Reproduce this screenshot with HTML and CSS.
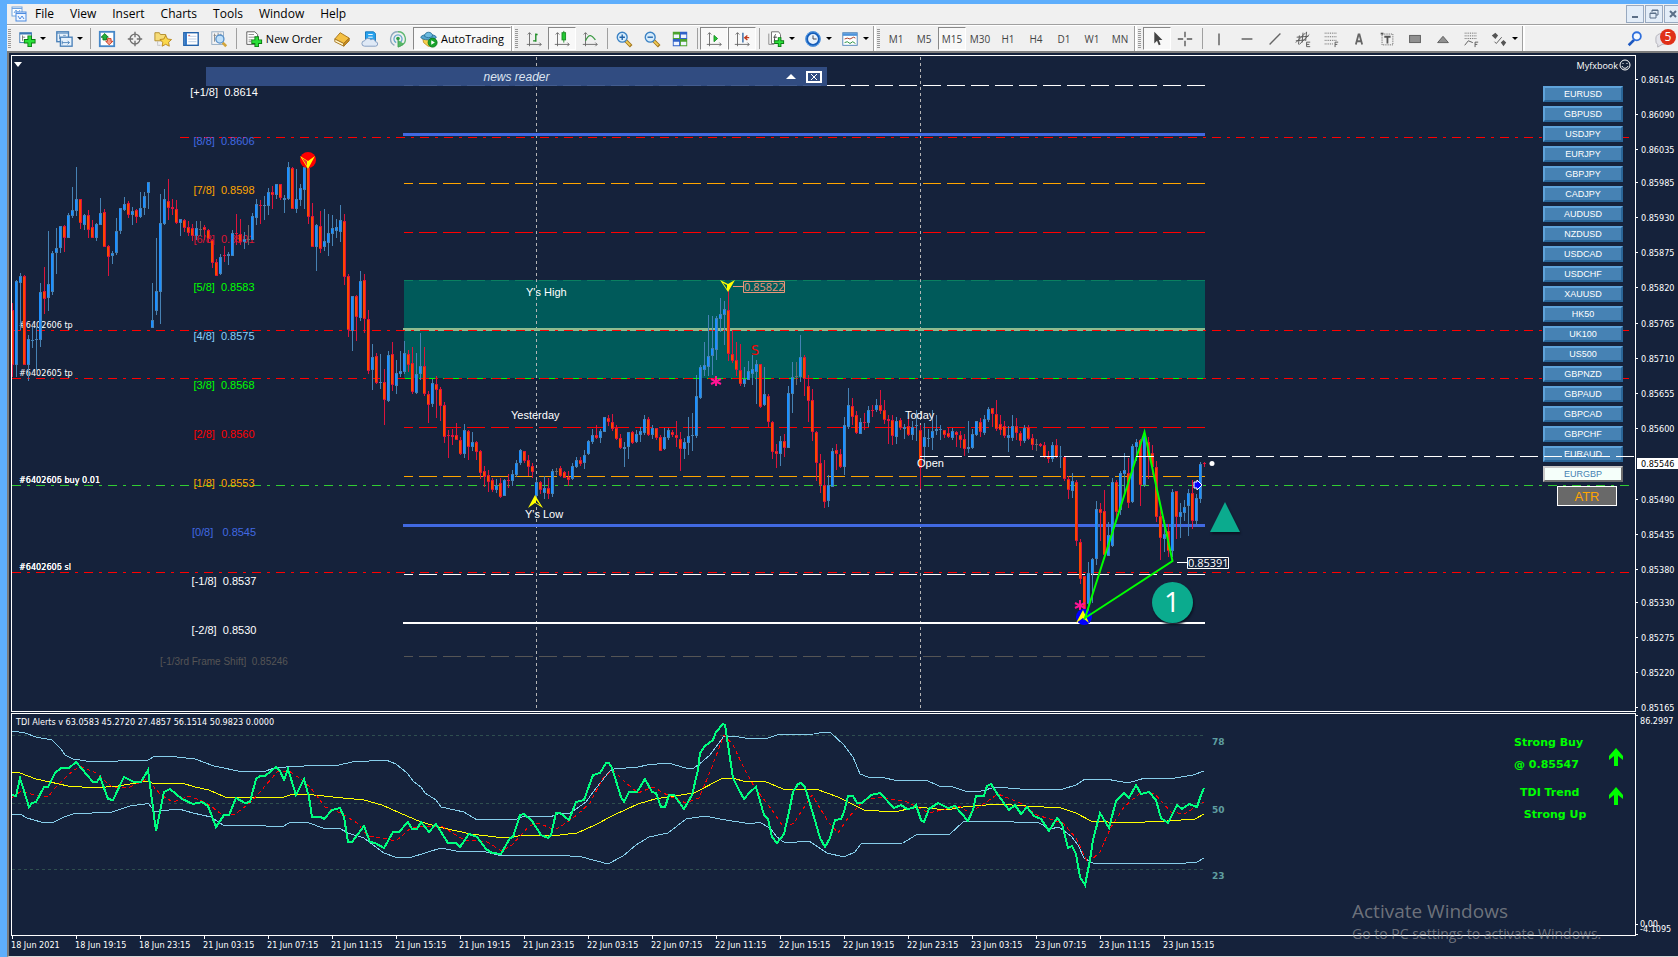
FILE: index.html
```
<!DOCTYPE html>
<html lang="en">
<head>
    <meta charset="UTF-8">
    <meta name="viewport" content="width=device-width, initial-scale=1.0">
    <title>EURGBP, M15</title>
    <link rel="stylesheet" href="styles.css">
</head>

<body>
    <div class="app">
        <header class="menubar">
            <svg class="app-icon" width="16" height="16" viewBox="0 0 16 16"><rect x="1" y="1" width="10" height="9" fill="#fff" stroke="#6fa3e0"/><path d="M1 2.500h10" stroke="#6fa3e0"/><path d="M3 7l2-3 2 3 2-3" fill="none" stroke="#6fa3e0"/><rect x="5" y="6" width="10" height="9" fill="#eef5ff" stroke="#4d8be0"/><path d="M5 7.500h10" stroke="#4d8be0"/><path d="M7 10l2 3 2-3 2 3" fill="none" stroke="#4d8be0"/></svg>
            <nav class="menu">
                <a href="#file">File</a>
                <a href="#view">View</a>
                <a href="#insert">Insert</a>
                <a href="#charts">Charts</a>
                <a href="#tools">Tools</a>
                <a href="#window">Window</a>
                <a href="#help">Help</a>
            </nav>
            <div class="window-buttons">
                <button aria-label="Minimize"><svg width="12" height="12"><path d="M3 9h6" stroke="#5b6f88" stroke-width="2"/></svg></button>
                <button aria-label="Restore"><svg width="12" height="12" fill="none" stroke="#5b6f88"><path d="M4 4V2h6v5H8M4 2.500h6"/><path d="M2 5h6v5H2zM2 5.500h6"/></svg></button>
                <button aria-label="Close"><svg width="12" height="12"><path d="M3 3l6 6M9 3l-6 6" stroke="#5b6f88" stroke-width="2"/></svg></button>
            </div>
        </header>

        <div class="toolbar">
            <div class="group">
                <span class="grip"></span>
                <button class="tool drop" aria-label="New chart"><svg viewBox="0 0 20 20"><rect x="2" y="3" width="13" height="11" fill="#fff" stroke="#3d78b4"/><path d="M2 4h13" stroke="#3d78b4" stroke-width="2"/><path d="M5 6v6M5 8h3" stroke="#777"/><path d="M13 6v13M6.500 12.500h13" stroke="#0a7a12" stroke-width="5"/><path d="M13 7v11M7.500 12.500h11" stroke="#2be03a" stroke-width="3"/></svg></button>
                <button class="tool drop" aria-label="Profiles"><svg viewBox="0 0 20 20"><rect x="2" y="2" width="13" height="11" fill="#e8f2fc" stroke="#4a80b8" stroke-width="1.500"/><path d="M2 3.500h13" stroke="#4a80b8"/><path d="M5 5v5l1-2M9 6h3" stroke="#6d96c0" fill="none"/><rect x="6" y="8" width="13" height="10" fill="#e8f2fc" stroke="#4a80b8" stroke-width="1.500"/><path d="M8 12v4M8 14h8l-2-2M16 14l-2 2" stroke="#4a80b8" fill="none"/></svg></button>
                <span class="sep"></span>
                <button class="tool" aria-label="Market Watch"><svg viewBox="0 0 20 20"><rect x="2" y="2" width="16" height="16" fill="#fff" stroke="#4587c8" stroke-width="2"/><path d="M7.500 4l4 4h-2v3h-4V8h-2z" fill="#24b13a" stroke="#0b7520"/><path d="M12.500 16.500l-4-4h2v-3h4v3h2z" fill="#f59a85" stroke="#c8361a"/></svg></button>
                <button class="tool" aria-label="Data Window"><svg viewBox="0 0 20 20" fill="none" stroke="#707070" stroke-width="1.500"><circle cx="10" cy="10" r="5.500"/><path d="M10 2v6M10 12v6M2 10h6M12 10h6"/></svg></button>
                <button class="tool" aria-label="Navigator"><svg viewBox="0 0 20 20"><path d="M1 3h5l1 2h6v7H1z" fill="#f6dc78" stroke="#b08a28"/><path d="M4 13v4h4" fill="none" stroke="#999" stroke-dasharray="1 1"/><path d="M13 6l2 4 4.500.6-3.300 3 .8 4.400-4-2.100-4 2.100.8-4.400-3.300-3L11 10z" fill="#fbd84b" stroke="#b8861c"/></svg></button>
                <button class="tool" aria-label="Terminal"><svg viewBox="0 0 20 20"><rect x="2" y="3" width="16" height="14" fill="#fff" stroke="#1d5ea8" stroke-width="1.500"/><path d="M4 3v14" stroke="#2e74c4" stroke-width="3"/><path d="M7 7h9M7 10h9M7 13h9" stroke="#b5cbe4"/><path d="M7 6h2" stroke="#d55" /></svg></button>
                <button class="tool" aria-label="Strategy Tester"><svg viewBox="0 0 20 20"><rect x="2" y="2" width="13" height="14" fill="#f4f4f4" stroke="#90a8c0"/><path d="M5 4v9M4 6h3M9 3v4M12 4v5" stroke="#888"/><path d="M14 14l4 4" stroke="#d2a53c" stroke-width="3"/><circle cx="11" cy="10" r="4.500" fill="#bfe0fa" stroke="#5890c8" stroke-width="1.500"/></svg></button>
                <span class="sep"></span>
                <button class="tool wide order"><svg viewBox="0 0 20 20"><path d="M2 2h9l3 3v11H2z" fill="#fff" stroke="#555"/><path d="M4 5h6M4 8h8M4 11h4M4 13h3" stroke="#888"/><path d="M13 7v12M7 13h12" stroke="#0a7a12" stroke-width="5"/><path d="M13 8v10M8 13h10" stroke="#2be03a" stroke-width="3"/></svg>New Order</button>
                <button class="tool" aria-label="MetaEditor"><svg viewBox="0 0 20 20"><path d="M2 10l6-7 10 6-6 6z" fill="#f4c044" stroke="#a4731a"/><path d="M2 10v3l10 5v-3z" fill="#fff3c8" stroke="#a4731a"/><path d="M12 15l6-6v3l-6 6z" fill="#c98b20" stroke="#a4731a"/></svg></button>
                <button class="tool" aria-label="Web terminal"><svg viewBox="0 0 20 20"><path d="M5 2h9l2 2v8H5z" fill="#29a3ee" stroke="#0b72b8"/><path d="M8 5h5M8 8h5" stroke="#fff"/><path d="M4 18a3 3 0 010-6 4 4 0 017-1 3 3 0 015 2 2.500 2.500 0 010 5z" fill="#dfe9f6" stroke="#7f99bd"/></svg></button>
                <button class="tool" aria-label="Signals"><svg viewBox="0 0 20 20" fill="none"><path d="M10 2a8 8 0 00-4 15" stroke="#8fa9bd" stroke-width="1.500"/><path d="M10 2a8 8 0 014 15" stroke="#5eb872" stroke-width="1.500"/><path d="M8 14a4.500 4.500 0 114 0" stroke="#6aa8cf" stroke-width="1.500"/><circle cx="10" cy="9.500" r="2" fill="#2f9e48"/><path d="M10 11v8c3-1 5-2 6-4" fill="#57b868" stroke="#3f9e52"/></svg></button>
                <button class="tool wide pressed auto"><svg viewBox="0 0 20 20"><path d="M3 9l1 5 5 4h4l4-8z" fill="#f7cf4a" stroke="#c0922a"/><ellipse cx="9.500" cy="8" rx="8.500" ry="3" fill="#55a5cf" stroke="#2d7299"/><path d="M5 7c0-6 9-6 9 0-3 2-6 2-9 0z" fill="#6cbbe0" stroke="#2d7299"/><circle cx="14" cy="14" r="5" fill="#18a32c" stroke="#0b7a1b"/><path d="M12.500 11.500l4 2.500-4 2.500z" fill="#fff"/></svg>AutoTrading</button>
            </div>
            <div class="group">
                <span class="grip"></span>
                <button class="tool" aria-label="Bar chart"><svg viewBox="0 0 20 20" fill="none" stroke="#666"><path d="M5 3v15M2 16h16M3 5l2-2 2 2M16 14l2 2-2 2"/><path d="M12 4v9M12 5h2M9 12h3" stroke="#1a8a22" stroke-width="1.500"/></svg></button>
                <button class="tool pressed" aria-label="Candlesticks"><svg viewBox="0 0 20 20" fill="none" stroke="#666"><path d="M5 3v15M2 16h16M3 5l2-2 2 2M16 14l2 2-2 2"/><path d="M12 1v13" stroke="#1a8a22"/><rect x="10" y="3" width="4" height="8" fill="#22c832" stroke="#1a8a22"/></svg></button>
                <button class="tool" aria-label="Line chart"><svg viewBox="0 0 20 20" fill="none" stroke="#666"><path d="M5 3v15M2 16h16M3 5l2-2 2 2M16 14l2 2-2 2"/><path d="M5 12c4-9 7-6 11-1" stroke="#3a9a42" stroke-width="1.500"/></svg></button>
                <span class="sep"></span>
                <button class="tool" aria-label="Zoom in"><svg viewBox="0 0 20 20"><path d="M12 12l6 6" stroke="#a4771c" stroke-width="4"/><path d="M12 12l5 5" stroke="#f0cb55" stroke-width="2"/><circle cx="8" cy="8" r="5.500" fill="#d6ecfc" stroke="#3b82c4" stroke-width="1.500"/><path d="M8 5v6M5 8h6" stroke="#1f62a8" stroke-width="1.500"/></svg></button>
                <button class="tool" aria-label="Zoom out"><svg viewBox="0 0 20 20"><path d="M12 12l6 6" stroke="#a4771c" stroke-width="4"/><path d="M12 12l5 5" stroke="#f0cb55" stroke-width="2"/><circle cx="8" cy="8" r="5.500" fill="#d6ecfc" stroke="#3b82c4" stroke-width="1.500"/><path d="M5 8h6" stroke="#1f62a8" stroke-width="1.500"/></svg></button>
                <button class="tool" aria-label="Tile windows"><svg viewBox="0 0 20 20"><path d="M2 2h8v8H2zM10 10h8v8h-8z" fill="#4aa22c"/><path d="M10 2h8v8h-8zM2 10h8v8H2z" fill="#2f62c8"/><path d="M3 5h6v4H3zM11 5h6v4h-6zM3 13h6v4H3zM11 13h6v4h-6z" fill="#eef4ff"/></svg></button>
                <span class="sep"></span>
                <button class="tool pressed" aria-label="Auto scroll"><svg viewBox="0 0 20 20" fill="none" stroke="#666"><path d="M5 3v15M2 16h16M3 5l2-2 2 2M16 14l2 2-2 2"/><path d="M10 6v7l4-3.500z" fill="#22c832" stroke="#1a8a22"/></svg></button>
                <button class="tool pressed" aria-label="Chart shift"><svg viewBox="0 0 20 20" fill="none" stroke="#666"><path d="M5 3v15M2 16h16M3 5l2-2 2 2M16 14l2 2-2 2"/><path d="M11 3v11" stroke="#2b62a0" stroke-width="1.500"/><path d="M18 8.500h-4M16 6l-3 2.500 3 2.500" stroke="#c23a1c" stroke-width="1.500"/></svg></button>
                <span class="sep"></span>
                <button class="tool drop" aria-label="Indicators"><svg viewBox="0 0 20 20"><path d="M5 2h8l2 3v10H5z" fill="#fff" stroke="#666"/><path d="M2 4v12h6" fill="none" stroke="#888"/><path d="M10 5c-2 0-1 3-2 8M7 8h4" fill="none" stroke="#333"/><path d="M14 8v11M8 13.500h11" stroke="#0a7a12" stroke-width="4"/><path d="M14 9v9M9 13.500h9" stroke="#2be03a" stroke-width="2"/></svg></button>
                <button class="tool drop" aria-label="Periods"><svg viewBox="0 0 20 20"><circle cx="10" cy="10" r="7" fill="#e8f2fc" stroke="#155cb8" stroke-width="3"/><circle cx="10" cy="10" r="8" fill="none" stroke="#5fa6ee"/><path d="M10 6v4h4" fill="none" stroke="#334"/></svg></button>
                <button class="tool drop" aria-label="Templates"><svg viewBox="0 0 20 20"><rect x="2" y="3" width="16" height="14" fill="#fff" stroke="#4a80b8"/><path d="M2 5h16" stroke="#4f94da" stroke-width="3"/><path d="M4 10l3-1 3 1 4-2 2 1" stroke="#a33018" fill="none"/><path d="M4 14l3-1 3 2 3-2 3 2" stroke="#1a8a32" fill="none"/></svg></button>
            </div>
            <div class="group">
                <span class="grip"></span>
                <button class="tool period">M1</button>
                <button class="tool period">M5</button>
                <button class="tool period pressed">M15</button>
                <button class="tool period">M30</button>
                <button class="tool period">H1</button>
                <button class="tool period">H4</button>
                <button class="tool period">D1</button>
                <button class="tool period">W1</button>
                <button class="tool period">MN</button>
            </div>
            <div class="group">
                <span class="grip"></span>
                <button class="tool pressed" aria-label="Cursor"><svg viewBox="0 0 20 20"><path d="M7 2v13l3-3 2 5 2-1-2-5h4z" fill="#444"/></svg></button>
                <button class="tool" aria-label="Crosshair"><svg viewBox="0 0 20 20" stroke="#555" stroke-width="1.500"><path d="M10 2v6M10 12v6M2 10h6M12 10h6"/></svg></button>
                <span class="sep"></span>
                <button class="tool" aria-label="Vertical line"><svg viewBox="0 0 20 20" stroke="#555" stroke-width="1.500"><path d="M10 4v13"/></svg></button>
                <button class="tool" aria-label="Horizontal line"><svg viewBox="0 0 20 20" stroke="#555" stroke-width="1.500"><path d="M4 10h12"/></svg></button>
                <button class="tool" aria-label="Trendline"><svg viewBox="0 0 20 20" stroke="#666" stroke-width="1.500"><path d="M4 16L16 4"/></svg></button>
                <button class="tool" aria-label="Equidistant channel"><svg viewBox="0 0 20 20" stroke="#555" fill="none"><path d="M2 14L13 3M6 16L17 5M3 8l13-1M2 12l11-1M6 6l-1 10M10 3l-1 11M14 2l-1 10"/><path d="M18 13.500h-4v5h4M14 16h3"/></svg></button>
                <button class="tool" aria-label="Fibonacci retracement"><svg viewBox="0 0 20 20" stroke="#555" fill="none"><path d="M3 3.500h14M3 7.500h14M3 11.500h14M3 15.500h9" stroke-dasharray="1 1"/><path d="M14.500 19v-5.500H18M14.500 16H17"/></svg></button>
                <button class="tool" aria-label="Text"><svg viewBox="0 0 20 20" stroke="#666" stroke-width="2" fill="none"><path d="M6.500 16L9.500 5h1l3 11M8 12.500h4"/></svg></button>
                <button class="tool" aria-label="Text label"><svg viewBox="0 0 20 20" stroke="#555" fill="none"><rect x="4.500" y="4.500" width="12" height="12" stroke-dasharray="1 1"/><path d="M3 3h3v2H3z" fill="#555" stroke="none"/><path d="M7 7.500h7M10.500 7v8" stroke-width="2"/></svg></button>
                <button class="tool" aria-label="Rectangle"><svg viewBox="0 0 20 20"><rect x="4" y="6" width="12" height="8" fill="#909090" stroke="#5a5a5a"/></svg></button>
                <button class="tool" aria-label="Triangle"><svg viewBox="0 0 20 20"><path d="M4 14l6-7 6 7z" fill="#909090" stroke="#5a5a5a"/></svg></button>
                <button class="tool" aria-label="Fibonacci fan"><svg viewBox="0 0 20 20" stroke="#555" fill="none"><path d="M3 3.500h14M3 6.500h14M3 9.500h14" stroke-dasharray="1 1"/><path d="M3 17l4-5 5 2M14.500 19v-5.500H18M14.500 16H17"/></svg></button>
                <button class="tool drop" aria-label="Arrows"><svg viewBox="0 0 20 20" fill="#555"><path d="M6 3l3 3-3 4-4-4zM15 11l3 3-3 4-3-4z"/><path d="M5 13l2 2 6-7" fill="none" stroke="#555"/></svg></button>
            </div>
            <div class="right-tools">
                <button class="tool" aria-label="Search"><svg viewBox="0 0 20 20" fill="none"><path d="M9 11l-6 6" stroke="#1d58c0" stroke-width="3"/><circle cx="12" cy="7" r="4.500" fill="#f4f9ff" stroke="#2f6fdc" stroke-width="2"/></svg></button>
                <button class="tool chat" aria-label="Messages"><svg viewBox="0 0 20 20"><path d="M1 9a6 5 0 0112 0v3a5 4 0 01-5 4l-5 3v-3a4 4 0 01-2-4z" fill="#e4e4ea" stroke="#b0b0b8"/></svg><span class="badge">5</span></button>
            </div>
        </div>

        <main class="workspace">
            <section class="pane main-pane">
                <svg class="plot" role="img" aria-label="EURGBP 15 minute chart">
                    <g id="backdrop" transform="translate(-12 -56)">
                        <rect class="zone" x="404" y="280" width="801" height="98"/>
                        <path d="M14 62h8l-4 5z" fill="#fff"/>
                        <line class="day" x1="536" x2="536" y1="57" y2="711"/>
                        <line class="day" x1="920" x2="920" y1="57" y2="711"/>
                    </g>
                    <g id="levels" transform="translate(-12 -56)"></g>
                    <g class="orders">
                        <line x1="168" x2="100%" y1="81.500" y2="81.500"/>
                        <line x1="0" x2="100%" y1="274.500" y2="274.500"/>
                        <line x1="0" x2="100%" y1="322.500" y2="322.500"/>
                        <line class="entry" x1="0" x2="100%" y1="429.500" y2="429.500"/>
                        <line x1="0" x2="100%" y1="516.500" y2="516.500"/>
                    </g>
                    <g class="level-text" transform="translate(-12 -56)">
                        <text x="224" y="96" fill="#fff">[+1/8]&#160; 0.8614</text>
                        <text x="224" y="145" fill="#4169e1">[8/8]&#160; 0.8606</text>
                        <text x="224" y="194" fill="#ffa500">[7/8]&#160; 0.8598</text>
                        <text x="224" y="243" fill="#dc1432">[6/8]&#160; 0.8591</text>
                        <text x="224" y="291" fill="#00ff00">[5/8]&#160; 0.8583</text>
                        <text x="224" y="340" fill="#87cefa">[4/8]&#160; 0.8575</text>
                        <text x="224" y="389" fill="#00ff00">[3/8]&#160; 0.8568</text>
                        <text x="224" y="438" fill="#ff0000">[2/8]&#160; 0.8560</text>
                        <text x="224" y="487" fill="#ffa500">[1/8]&#160; 0.8553</text>
                        <text x="224" y="536" fill="#4169e1">[0/8]&#160;&#160; 0.8545</text>
                        <text x="224" y="585" fill="#fff">[-1/8]&#160; 0.8537</text>
                        <text x="224" y="634" fill="#fff">[-2/8]&#160; 0.8530</text>
                        <text class="small" x="224" y="665" fill="#555">[-1/3rd Frame Shift]&#160; 0.85246</text>
                    </g>
                    <g class="order-text" transform="translate(-12 -56)">
                        <text x="19" y="328">#6402606 tp</text>
                        <text x="19" y="376">#6402605 tp</text>
                        <text x="19" y="483">#6402605 buy 0.01</text>
                        <text x="19" y="483">#6402606 buy 0.01</text>
                        <text x="19" y="570">#6402605 sl</text>
                        <text x="19" y="570">#6402606 sl</text>
                    </g>
                    <g id="candles" transform="translate(-12 -56)"></g>
                    <g transform="translate(-12 -56)">
                        <g class="note-text">
                            <text x="526" y="296">Y's High</text>
                            <text x="511" y="419">Yesterday</text>
                            <text x="525" y="518">Y's Low</text>
                            <text x="905" y="419">Today</text>
                            <text x="917" y="467">Open</text>
                        </g>
                        <circle cx="308" cy="160" r="8" fill="#f00"/>
                        <path d="M300 156l8 5 7-5-7 13z" fill="#ff0"/>
                        <path d="M302 158l5 3v5z" fill="#e33"/>
                        <path d="M720 280l8 4 7-4-7 12z" fill="#ff0"/>
                        <path d="M723 283l4 2v4z" fill="#005a5a"/>
                        <path d="M535 495l-7 13 7-5 8 5z" fill="#ff0"/>
                        <path d="M536 500l4 5-4-2z" fill="#15223b"/>
                        <path class="tag salmon" d="M733 286.500h10M743.500 281.500h41v11h-41z"/>
                        <text class="tag-text salmon" x="744" y="291">0.85822</text>
                        <text class="sell" x="755" y="355">S</text>
                        <g class="stars">
                            <path d="M716 376v10M711 379l10 5M721 379l-10 5"/>
                            <path d="M1080 600v10M1075 603l10 5M1085 603l-10 5"/>
                        </g>
                        <circle cx="1084" cy="617" r="8" fill="#00f"/>
                        <path d="M1083 610l-7 13 7-5 6 5z" fill="#ff0"/>
                        <path class="zigzag" d="M1085 618L1144.500 432 1172.500 561z"/>
                        <path class="tag" d="M1177 562.500h10M1187.500 557.500h41v11h-41z"/>
                        <text class="tag-text" x="1188" y="567">0.85391</text>
                        <path d="M1194 482h3v-2l5 5-5 5v-2h-3z" fill="#00f" stroke="#fff"/>
                        <circle cx="1212" cy="463.500" r="2.500" fill="#fff"/>
                        <path class="callout" d="M1225 502l15 30h-30z"/>
                        <circle class="callout" cx="1172.500" cy="602.500" r="20.500"/>
                        <text class="callout-text" x="1172" y="612">1</text>
                    </g>
                </svg>

                <div class="news">
                    <span class="news-title">news reader</span>
                    <span class="news-buttons">
                        <button aria-label="Collapse"><svg width="10" height="12"><path d="M0 8l5-5 5 5z" fill="#fff"/></svg></button>
                        <button aria-label="Close"><svg width="16" height="12" fill="none" stroke="#fff"><rect x="1" y="1" width="14" height="10" stroke-width="2"/><path d="M5 3l6 6M11 3l-6 6"/></svg></button>
                    </span>
                </div>

                <div class="side">
                    <p class="expert">Myfxbook <svg width="12" height="12" fill="none" stroke="#fff"><circle cx="6" cy="6" r="5"/><path d="M4 4v1M8 4v1M3 7c1 3 5 3 6 0"/></svg></p>
                    <div class="symbols">
                        <button>EURUSD</button>
                        <button>GBPUSD</button>
                        <button>USDJPY</button>
                        <button>EURJPY</button>
                        <button>GBPJPY</button>
                        <button>CADJPY</button>
                        <button>AUDUSD</button>
                        <button>NZDUSD</button>
                        <button>USDCAD</button>
                        <button>USDCHF</button>
                        <button>XAUUSD</button>
                        <button>HK50</button>
                        <button>UK100</button>
                        <button>US500</button>
                        <button>GBPNZD</button>
                        <button>GBPAUD</button>
                        <button>GBPCAD</button>
                        <button>GBPCHF</button>
                        <button>EURAUD</button>
                        <button class="active">EURGBP</button>
                    </div>
                    <button class="atr">ATR</button>
                </div>

                <svg class="plot over"><line class="open-line" x1="908" x2="100%" y1="400.500" y2="400.500"/></svg>
            </section>
            <svg class="axis" id="priceAxis"></svg>

            <section class="pane tdi-pane">
                <svg class="plot" role="img" aria-label="TDI indicator">
                    <g id="tdi" transform="translate(-12 -714)">
                        <path class="tdi-level" d="M12 735.500h1192M12 803.500h1192M12 869.500h1192"/>
                    </g>
                    <g class="tdi-text" transform="translate(-12 -714)">
                        <text x="1212" y="745">78</text>
                        <text x="1212" y="813">50</text>
                        <text x="1212" y="879">23</text>
                    </g>
                </svg>
                <p class="tdi-title">TDI Alerts v 63.0583 45.2720 27.4857 56.1514 50.9823 0.0000</p>
                <div class="signals">
                    <div class="signal buy">
                        <p>Strong Buy<br>@ 0.85547</p>
                        <svg width="16" height="18"><path d="M8 0l7 8v4l-5-4v10H6V8l-5 4V8z" fill="#0f0"/></svg>
                    </div>
                    <div class="signal trend">
                        <p>TDI Trend<br>&#160;Strong Up</p>
                        <svg width="16" height="18"><path d="M8 0l7 8v4l-5-4v10H6V8l-5 4V8z" fill="#0f0"/></svg>
                    </div>
                </div>
            </section>
            <svg class="axis" id="tdiAxis">
                <path d="M0 2.500h2M0 211.500h2M0 221.500h2" stroke="#fff"/>
                <text x="4" y="11">86.2997</text>
                <text x="4" y="214">0.00</text>
                <text x="4" y="219">-4.1095</text>
            </svg>

            <div class="time-axis">
                <span>18 Jun 2021</span>
                <span>18 Jun 19:15</span>
                <span>18 Jun 23:15</span>
                <span>21 Jun 03:15</span>
                <span>21 Jun 07:15</span>
                <span>21 Jun 11:15</span>
                <span>21 Jun 15:15</span>
                <span>21 Jun 19:15</span>
                <span>21 Jun 23:15</span>
                <span>22 Jun 03:15</span>
                <span>22 Jun 07:15</span>
                <span>22 Jun 11:15</span>
                <span>22 Jun 15:15</span>
                <span>22 Jun 19:15</span>
                <span>22 Jun 23:15</span>
                <span>23 Jun 03:15</span>
                <span>23 Jun 07:15</span>
                <span>23 Jun 11:15</span>
                <span>23 Jun 15:15</span>
            </div>

            <div class="watermark">
                <p class="big">Activate Windows</p>
                <p>Go to PC settings to activate Windows.</p>
            </div>
        </main>
    </div>

    <script src="chart.js"></script>
</body>
</html>
```
FILE: styles.css
```
* {
    box-sizing: border-box;
}

body {
    margin: 0;
    font-family: "Open Sans", "Noto Sans", sans-serif;
    overflow: hidden;
}

p {
    margin: 0;
}

button {
    margin: 0;
    padding: 0;
    border: none;
    background: none;
    font: inherit;
    color: inherit;
}

.app {
    display: flex;
    flex-direction: column;
    height: 100vh;
    padding: 4px 0 0 7px;
    background: #5eaefc;
}

/* Menu */
.menubar {
    display: flex;
    align-items: center;
    height: 21px;
    padding-left: 4px;
    background: #f0f0f0;
    border-bottom: 1px solid #a0a0a0;
    overflow: hidden;
}

.menu {
    display: flex;
    flex: 1;
    gap: 16px;
    padding-left: 8px;
}

.menu a {
    color: #000;
    font-size: 12px;
    line-height: 18px;
    text-decoration: none;
}

.window-buttons {
    display: flex;
    gap: 1px;
    margin-right: -4px;
}

.window-buttons button {
    display: flex;
    align-items: center;
    justify-content: center;
    width: 18px;
    height: 18px;
    background: #e3edf8;
    border: 1px solid #98a9c0;
}

/* Toolbar */
.toolbar {
    display: flex;
    height: 28px;
    background: #f0f0f0;
    border-top: 1px solid #fff;
    border-bottom: 2px solid #7c7c7c;
    overflow: hidden;
}

.group {
    display: flex;
    align-items: center;
    border-right: 2px solid #fff;
    box-shadow: inset -1px 0 #a0a0a0;
    padding-right: 1px;
}

.grip {
    width: 6px;
    height: 20px;
    border-right: 2px solid transparent;
    background: repeating-linear-gradient(#999 0 1px, #f0f0f0 1px 2px) content-box;
    padding-left: 1px;
}

.sep {
    width: 6px;
    height: 21px;
    background: linear-gradient(90deg, transparent 3px, #a0a0a0 3px 4px, transparent 4px);
}

.tool {
    display: flex;
    align-items: center;
    justify-content: center;
    width: 28px;
    height: 23px;
    flex-shrink: 0;
}

.tool svg {
    width: 18px;
    height: 18px;
}

.tool.drop {
    width: 37px;
    justify-content: flex-start;
    gap: 4px;
    padding-left: 5px;
}

.tool.drop::after {
    content: "";
    border: 3px solid transparent;
    border-top-color: #000;
    border-bottom: none;
}

.tool.wide {
    font-size: 11px;
    gap: 3px;
    white-space: nowrap;
}

.tool.order {
    width: 89px;
}

.tool.auto {
    width: 98px;
    margin-left: 1px;
}

.tool.period {
    font-size: 10px;
    color: #444;
}

.pressed {
    background: #f8f8f8;
    border: 1px solid #fff;
    border-top-color: #888;
    border-left-color: #888;
}

.right-tools {
    display: flex;
    align-items: center;
    margin-left: auto;
}

.chat {
    position: relative;
    width: 29px;
}

.badge {
    position: absolute;
    top: 2px;
    right: 2px;
    width: 16px;
    height: 16px;
    border-radius: 8px;
    background: #e03018;
    color: #fff;
    font-size: 12px;
    line-height: 16px;
    text-align: center;
}

/* Charts */
.workspace {
    position: relative;
    display: grid;
    grid-template-columns: 1fr 42px;
    grid-template-rows: 1fr 223px 20px;
    flex: 1;
    min-height: 0;
    padding: 2px 0 0 2px;
    background: #15223b;
    border-left: 2px solid #7c7c7c;
    border-bottom: 1px solid #d8d8d8;
    font-family: "DejaVu Sans Condensed", "DejaVu Sans", sans-serif;
    font-size: 9px;
    color: #fff;
}

.pane {
    position: relative;
    border: 1px solid #fff;
    overflow: hidden;
}

.main-pane {
    margin-bottom: 1px;
}

.plot {
    position: absolute;
    inset: 0;
    width: 100%;
    height: 100%;
}

.plot.over {
    pointer-events: none;
}

.axis {
    width: 100%;
    height: 100%;
    overflow: hidden;
}

.axis text {
    fill: #fff;
    font-size: 9px;
}

.axis .current {
    fill: #000;
}

.zone {
    fill: #005a5a;
}

.day {
    stroke: #b4b4b4;
    stroke-dasharray: 3 3;
    shape-rendering: crispEdges;
}

#levels,
.orders,
.open-line,
#candles {
    shape-rendering: crispEdges;
}

.orders line {
    stroke: #f00;
    stroke-dasharray: 9 6 3 6;
}

.orders .entry {
    stroke: #32cd32;
}

.open-line {
    stroke: #fff;
    stroke-dasharray: 18 6;
}

.level-text text,
.note-text text {
    font-family: "Liberation Sans", Arial, sans-serif;
    font-size: 11px;
}

.level-text text {
    text-anchor: middle;
}

.level-text .small {
    font-size: 10px;
}

.order-text,
.note-text {
    fill: #fff;
}

.tag {
    fill: none;
    stroke: #fff;
}

.tag.salmon {
    stroke: #e9967a;
}

.tag-text {
    fill: #fff;
    font-family: "Open Sans", sans-serif;
    font-size: 11px;
}

.tag-text.salmon {
    fill: #e9967a;
}

.sell {
    fill: #f00;
    font-size: 14px;
    text-anchor: middle;
}

.stars {
    stroke: #ff1493;
    stroke-width: 2;
}

.zigzag {
    fill: none;
    stroke: #0f0;
    stroke-width: 2;
}

.callout {
    fill: #0bab8e;
    filter: drop-shadow(1px 2px 1px #0a1222);
}

.callout-text {
    fill: #fff;
    font-family: "Open Sans", sans-serif;
    font-size: 28px;
    text-anchor: middle;
}

/* News reader bar */
.news {
    position: absolute;
    top: 11px;
    left: 194px;
    width: 621px;
    height: 19px;
    display: grid;
    grid-template-columns: 1fr auto 1fr;
    align-items: center;
    background: rgba(52, 80, 134, .93);
}

.news-title {
    grid-column: 2;
    font: italic 12px "Liberation Sans", Arial, sans-serif;
    color: #dde4f0;
}

.news-buttons {
    display: flex;
    justify-content: flex-end;
    gap: 10px;
    padding-right: 5px;
}

.news-buttons button {
    display: flex;
}

/* Symbol switcher */
.side {
    position: absolute;
    top: 2px;
    right: 4px;
    width: 88px;
}

.expert {
    display: flex;
    align-items: center;
    justify-content: flex-end;
    gap: 1px;
    height: 14px;
    font-family: "Open Sans", sans-serif;
    font-size: 9px;
}

.symbols {
    display: flex;
    flex-direction: column;
    gap: 4px;
    width: 80px;
    margin-top: 14px;
}

.symbols button {
    height: 16px;
    background: #4682b4;
    border: 2px solid;
    border-color: #5fa3da #2a6698 #2a6698 #5fa3da;
    font: 9px/12px "Liberation Sans", Arial, sans-serif;
    color: #fff;
}

.symbols .active {
    background: #f5fffa;
    border-color: #c8c8c8 #6e6e6e #6e6e6e #c8c8c8;
    color: #4682b4;
}

.atr {
    display: block;
    width: 60px;
    height: 20px;
    margin: 4px 0 0 14px;
    background: #696969;
    border: 1px solid #fff;
    font: 13px "Liberation Sans", Arial, sans-serif;
    color: #ffa500;
}

/* TDI window */
.tdi-level {
    stroke: #2f4f4f;
    stroke-dasharray: 3 3;
}

.tdi-line {
    fill: none;
    shape-rendering: crispEdges;
}

.tdi-text text {
    font: bold 9px "DejaVu Sans", sans-serif;
    fill: #5f9ea0;
}

.tdi-title {
    position: absolute;
    top: 2px;
    left: 4px;
    line-height: 12px;
}

.signals {
    position: absolute;
    top: 18px;
    right: 11px;
    width: 110px;
    font: bold 11px/22px "DejaVu Sans", sans-serif;
    color: #0f0;
}

.signal {
    display: flex;
    align-items: flex-start;
    justify-content: space-between;
    margin-bottom: 6px;
}

.buy svg {
    margin-top: 16px;
}

.trend svg {
    margin-top: 5px;
}

.trend p {
    padding-left: 6px;
}

.time-axis {
    display: grid;
    grid-template-columns: repeat(19, 64px);
    line-height: 18px;
    white-space: nowrap;
}

.time-axis span {
    background: linear-gradient(#fff, #fff) 1px 0 / 1px 3px no-repeat;
}

.watermark {
    position: absolute;
    right: 71px;
    bottom: 12px;
    width: 255px;
    font: 14px/20px "Open Sans", sans-serif;
    color: rgba(160, 160, 160, .65);
    white-space: nowrap;
    pointer-events: none;
}

.watermark .big {
    font-size: 19px;
    line-height: 26px;
}
```
FILE: chart.js
```
const NS = 'http://www.w3.org/2000/svg';

function add(parent, name, attrs, text) {
    const el = document.createElementNS(NS, name);
    for (const key in attrs) el.setAttribute(key, attrs[key]);
    if (text) el.textContent = text;
    parent.appendChild(el);
    return el;
}

// Murrey levels: y, colour, thickness, solid
const levels = [
    [85, '#fff', 1], [134, '#4169e1', 3, true], [183, '#ffa500', 1], [232, '#f00', 1],
    [280, '#0a8060', 1], [329, '#8fbc8f', 3, true], [378, '#0f0', 1], [427, '#f00', 1],
    [476, '#ffa500', 1], [525, '#4169e1', 3, true], [574, '#fff', 1], [622.5, '#fff', 2, true],
    [656, '#555', 1]
];
const levelGroup = document.getElementById('levels');
levels.forEach(([y, color, width, solid]) => {
    add(levelGroup, 'line', {
        x1: solid ? 403 : 404, x2: 1205, y1: y + 0.5, y2: y + 0.5,
        stroke: color, 'stroke-width': width,
        'stroke-dasharray': solid ? 'none' : '18 6', 'stroke-dashoffset': 9
    });
});

// Candles: direction (u, d, g - doji), high, body top, body bottom, low
const candles = `
d303,310,365,377 u280,281,365,377 u273,276,283,330 d275,276,365,365 u335,339,365,381
u327,340,341,348 u327,339,340,375 u283,292,340,347 d267,291,299,314 u231,284,298,311
u251,253,292,295 u228,248,253,274 u226,226,248,253 d225,226,238,252 u213,215,238,238
u187,210,216,218 u167,199,211,216 d199,199,223,229 u214,215,225,230 d210,215,230,238
d220,227,238,238 u223,224,238,241 u198,213,225,225 d209,212,247,247 d245,246,257,276
u251,253,256,264 u218,231,253,255 u208,208,231,234 u197,204,210,211 d201,203,215,218
u207,211,215,225 d209,210,217,223 u192,208,217,218 u192,196,208,215 u182,182,193,209
u283,320,328,328 u238,291,311,315 u194,223,292,324 u189,199,224,225 d179,201,208,220
d199,207,209,215 d200,209,223,224 u219,219,223,236 d219,220,228,232 d221,227,233,236
d224,228,236,241 u221,228,236,240 g221,229,230,236 d225,227,230,240 d229,230,239,242
d239,240,263,268 d259,262,276,276 u254,257,274,275 d246,255,256,262 u252,254,256,265
u230,233,256,256 d214,233,234,245 d219,234,242,245 u232,239,242,249 g225,239,240,245
u213,216,240,240 u199,204,218,225 d200,205,206,224 u196,205,206,220 u188,192,206,215
d186,192,195,209 u184,184,195,199 d184,184,198,200 u195,198,200,213 u162,167,199,200
d167,168,209,209 u169,199,209,213 u184,188,200,206 u165,167,190,209 d168,168,217,224
d203,216,247,247 u224,225,247,271 d211,226,249,253 u209,241,247,251 u214,233,243,256
u215,228,234,246 u219,227,231,238 u205,220,232,242 d214,221,277,285 d274,276,330,337
u296,296,331,351 d295,296,317,341 u271,281,318,321 d274,280,319,333 d310,319,371,374
u344,357,370,390 d353,356,383,384 u354,382,383,389 d369,382,400,425 u351,355,401,402
d342,354,385,391 u360,373,386,394 u351,371,374,377 u341,353,372,374 d350,354,365,372
d347,363,392,394 u353,374,393,394 u333,366,374,380 d347,366,394,396 d391,394,405,423
u379,383,404,407 d376,384,390,418 d387,389,406,421 d402,405,437,443 d430,435,436,458
d429,435,437,445 d423,435,440,440 d437,440,454,455 u424,430,454,458 d430,431,447,460
u432,442,447,451 d441,442,452,460 d450,451,473,479 d466,471,477,487 d470,475,482,492
d478,480,490,492 u479,485,490,493 d478,483,497,498 u479,480,496,496 d474,480,481,488
u470,474,481,486 u460,463,475,477 u449,450,463,465 d451,451,461,463 d455,460,467,476
d463,466,472,478 u480,482,496,498 d481,482,490,494 u476,488,493,499 d478,488,494,499
u469,471,494,497 g468,471,472,475 d466,468,476,477 d471,472,478,478 d471,477,480,486
u463,466,479,480 u457,460,467,468 d457,460,464,466 u450,455,463,469 u440,441,454,455
u429,435,442,444 d425,435,438,439 u429,431,438,443 u417,417,432,432 d415,418,422,426
d414,422,429,431 d425,428,439,440 d434,438,448,449 u442,447,449,467 u432,432,447,459
d431,432,443,444 u430,434,442,443 u427,431,435,442 u415,419,433,435 d417,419,435,436
u425,428,435,439 d428,428,438,440 d435,437,451,451 u428,437,449,450 u428,430,438,440
d430,432,435,437 d421,435,438,447 d432,439,449,471 u438,442,449,459 u417,436,443,455
u413,435,436,451 u375,396,436,438 u365,367,398,399 u342,365,370,376 u315,356,367,376
u316,348,356,375 u316,318,350,360 u298,314,319,332 u301,309,315,345 d290,310,354,361
d330,354,361,363 d342,360,370,376 d344,370,384,386 u367,379,384,387 u361,371,380,380
u355,369,374,385 u360,364,372,404 d364,364,407,408 u367,394,405,406 d394,396,422,427
d421,422,452,459 d444,451,454,468 u436,441,454,466 d434,441,448,457 u386,393,448,448
u362,377,394,413 g362,376,377,385 u335,357,377,382 d355,357,379,396 d375,386,401,422
d389,400,432,441 d431,432,463,481 d454,463,485,493 d460,485,502,508 u475,485,501,507
u448,451,487,487 d444,450,454,470 d449,454,467,468 u417,425,467,475 u388,405,427,429
d398,406,417,425 d411,415,433,434 u418,422,434,434 d413,422,423,430 u406,410,423,427
d405,410,411,417 u399,405,410,412 d390,405,411,414 d400,410,420,424 d415,419,421,444
d415,420,436,445 u417,421,437,444 d418,420,428,430 u424,427,429,439 d419,426,435,436
u421,427,435,440 u410,425,426,441 d425,430,468,489 u423,437,447,462 u429,438,439,447
u410,431,438,450 u415,429,431,435 u425,429,430,440 d430,430,435,438 d428,433,437,438
u428,431,438,440 d431,432,435,447 d431,435,440,448 d434,439,449,456 u421,447,449,453
u429,434,448,449 u421,421,435,436 d418,422,432,437 u415,419,433,435 u407,409,420,422
d408,408,414,427 d400,414,429,431 d415,424,430,435 d421,426,436,438 u426,435,438,452
u415,426,438,441 d418,426,433,440 d431,433,441,446 u425,428,441,443 d425,427,439,440
d434,438,445,450 g439,444,445,451 d443,444,446,447 d442,445,457,458 d451,456,459,463
u442,445,459,462 d439,445,457,458 u446,456,457,468 d456,457,479,481 d476,479,490,499
u473,481,491,498 d480,482,541,546 d539,542,579,584 d576,576,609,617 u562,573,604,615
u558,559,574,603 u501,509,559,565 d503,509,513,541 d490,511,555,555 u522,535,556,556
u478,482,546,547 d480,482,512,520 u471,473,510,515 u453,470,474,495 d458,473,503,508
u444,446,502,503 u439,442,447,461 d439,440,485,506 u433,434,485,487 d437,442,457,479
d445,453,467,475 d461,467,517,522 d505,516,538,560 u520,534,539,552 d524,531,551,557
u489,492,551,557 d491,491,517,539 u503,512,517,538 u500,507,513,521 u489,493,506,536
d480,493,521,529 u494,498,521,526 u462,464,499,503 d462,463,464,467
`.trim().split(/\s+/);

const colors = {
    u: ['#4682b4', '#1e90ff'],
    d: ['#dc143c', '#ff4500'],
    g: ['#696969', '#696969']
};
const candleGroup = document.getElementById('candles');
candles.forEach((candle, i) => {
    const [high, top, bottom, low] = candle.slice(1).split(',').map(Number);
    const [edge, fill] = colors[candle[0]];
    const x = 12 + i * 4;
    const body = Math.max(1, bottom - top);
    add(candleGroup, 'rect', { x, y: high, width: 1, height: Math.max(1, low - high), fill: edge });
    add(candleGroup, 'rect', { x: x - 1, y: top, width: 3, height: body, fill: edge });
    if (body > 2) {
        add(candleGroup, 'rect', { x: x - 1, y: top + 1, width: 2, height: body - 2, fill });
    }
});

// Price scale
const prices = [
    [79, '0.86145'], [114, '0.86090'], [149, '0.86035'], [182, '0.85985'], [217, '0.85930'],
    [252, '0.85875'], [287, '0.85820'], [323, '0.85765'], [358, '0.85710'], [393, '0.85655'],
    [428, '0.85600'], [499, '0.85490'], [534, '0.85435'], [569, '0.85380'], [602, '0.85330'],
    [637, '0.85275'], [672, '0.85220'], [707, '0.85165']
];
const priceAxis = document.getElementById('priceAxis');
prices.forEach(([y, label]) => {
    add(priceAxis, 'rect', { x: 0, y: y - 55, width: 2, height: 1, fill: '#fff' });
    add(priceAxis, 'text', { x: 5, y: y - 51 }, label);
});
add(priceAxis, 'rect', { x: 1, y: 403, width: 41, height: 11, fill: '#fff' });
add(priceAxis, 'text', { x: 5, y: 412, class: 'current' }, '0.85546');

// TDI lines
const tdi = [
    ['#87ceeb', 1, `12,731 25,733 36,737 52,740 61,749 65,755 73,759 93,762 118,761 148,760
        155,756 177,757 195,759 214,766 243,772 266,771 271,769 286,767 304,766 339,765 352,762
        386,760 396,764 407,773 414,782 421,787 425,793 436,800 441,807 464,812 477,820 496,819
        514,820 525,816 550,817 560,813 569,814 586,802 593,792 601,782 610,771 614,769 638,767
        647,765 668,763 686,768 694,768 703,761 710,755 716,747 724,736 733,736 751,739 768,738
        777,735 814,734 825,732 831,733 844,745 853,757 860,774 868,777 885,778 894,780 926,780
        939,786 950,786 965,791 981,791 996,787 1020,789 1063,789 1076,785 1085,779 1106,779
        1128,783 1145,778 1169,779 1193,775 1204,771`],
    ['#87ceeb', 1, `12,814 20,814 27,818 41,822 54,822 64,817 73,814 112,812 130,806 145,804
        148,803 155,812 159,811 179,809 193,813 211,817 223,825 266,826 282,827 291,822 309,823
        323,828 339,828 348,833 364,838 373,845 384,853 395,857 412,857 425,853 441,848 461,852
        482,851 498,855 557,855 582,857 608,864 623,856 636,845 649,837 668,833 686,819 705,816
        720,819 751,824 759,822 770,828 777,837 785,843 809,841 827,853 844,857 855,852 861,844
        903,843 916,835 950,834 963,822 989,821 1039,823 1050,829 1059,827 1072,837 1078,845
        1084,858 1093,863 1163,863 1176,864 1197,862 1204,858`],
    ['#ff0', 1, `12,772 20,773 36,779 50,782 68,786 95,788 118,786 148,781 154,784 182,783
        195,787 209,790 225,797 250,798 284,797 293,794 314,795 343,798 364,800 382,805 400,813
        421,822 443,828 471,834 504,838 525,835 560,835 577,833 595,825 614,815 638,804 655,799
        694,793 723,778 733,778 746,782 764,781 783,789 816,789 838,797 864,810 894,812 918,807
        946,810 963,807 998,804 1026,806 1061,808 1076,813 1091,821 1124,823 1167,821 1195,819
        1204,814`],
    ['#f00', 1, `12,798 21,791 34,795 48,797 55,788 68,775 80,766 96,773 112,787 130,787
        147,779 152,785 161,795 173,802 189,796 207,803 221,814 234,815 250,803 266,785 277,772
        289,771 302,780 311,788 325,807 341,813 357,823 368,836 382,838 396,841 411,828 429,826
        443,827 464,840 487,842 502,851 512,845 529,826 539,823 554,830 560,827 577,815 590,803
        603,778 613,770 625,782 638,793 653,787 671,797 686,803 699,798 710,772 724,735 733,745
        744,768 755,788 772,810 784,828 794,823 812,795 829,823 838,833 848,818 864,800 881,797
        907,802 929,813 959,806 970,813 998,794 1020,803 1037,815 1063,823 1076,838 1088,863
        1100,852 1111,827 1124,807 1139,794 1154,793 1171,812 1184,814 1204,802`, '4 3'],
    ['#00ff7f', 2, `12,795 16,796 20,778 29,807 32,803 36,802 44,787 48,787 55,773 61,768
        69,768 76,762 93,782 97,782 100,777 108,799 113,800 124,777 134,782 141,782 148,770
        156,831 164,792 170,789 182,799 193,804 202,802 208,806 216,827 224,815 229,815 236,798
        245,803 250,802 256,779 260,776 265,776 276,767 280,771 284,780 288,769 296,795 304,779
        309,797 312,817 321,817 324,819 332,810 340,808 344,817 348,842 352,842 364,826 370,842
        375,843 384,848 393,832 399,832 408,822 412,829 417,829 421,822 429,832 436,824 448,843
        456,843 460,847 469,834 477,837 486,849 492,853 501,854 510,838 513,837 520,815 524,814
        532,821 541,835 548,838 551,835 556,813 560,813 569,820 576,802 584,800 593,775 600,773
        606,763 609,763 612,768 621,797 624,802 629,792 637,792 645,779 652,792 656,793 661,807
        665,807 669,795 674,795 684,809 692,795 698,770 700,753 705,746 713,740 716,732 723,724
        725,725 733,778 738,788 744,799 751,791 756,787 764,815 768,819 772,837 777,843 784,834
        789,812 793,792 798,784 801,783 805,787 814,817 820,838 825,847 830,838 835,820 841,819
        844,812 848,796 853,796 857,803 862,803 871,795 880,793 894,808 901,805 907,809 913,808
        916,805 921,820 924,822 929,809 938,803 948,808 955,806 968,821 973,810 976,796 984,796
        987,786 991,784 998,795 1009,810 1015,805 1021,814 1027,807 1034,816 1041,819 1049,831
        1057,818 1062,824 1068,848 1072,846 1076,854 1080,877 1085,885 1090,860 1093,840
        1100,813 1109,828 1116,801 1124,793 1129,798 1136,785 1141,794 1149,792 1156,800
        1161,818 1168,823 1177,805 1182,809 1189,804 1197,807 1201,795 1204,788`]
];
const tdiGroup = document.getElementById('tdi');
tdi.forEach(([stroke, width, points, dash]) => {
    add(tdiGroup, 'polyline', {
        class: 'tdi-line', points, stroke, 'stroke-width': width, 'stroke-dasharray': dash || 'none'
    });
});
```
